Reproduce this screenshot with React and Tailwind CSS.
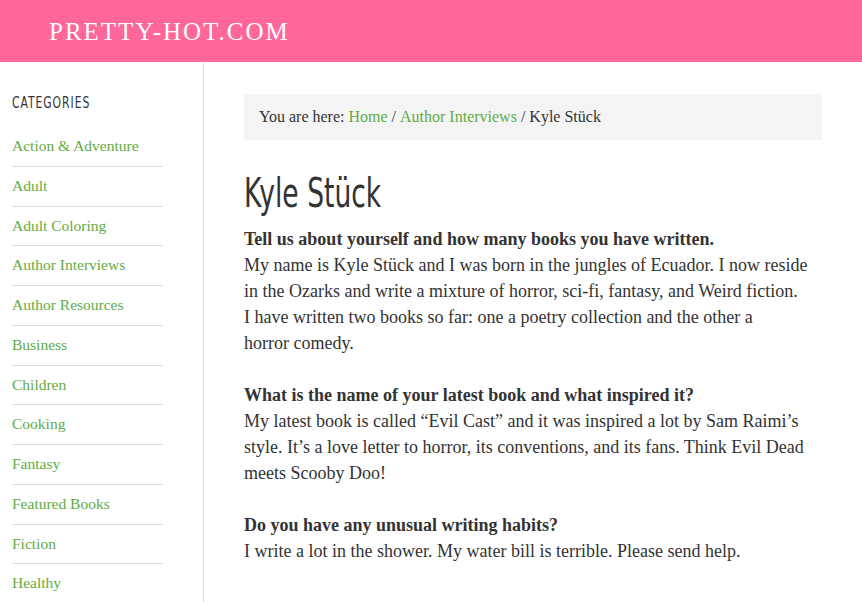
export default function App() {
  const cats = [
    "Action & Adventure",
    "Adult",
    "Adult Coloring",
    "Author Interviews",
    "Author Resources",
    "Business",
    "Children",
    "Cooking",
    "Fantasy",
    "Featured Books",
    "Fiction",
    "Healthy",
  ];
  const serif = { fontFamily: '"Liberation Serif", serif' };
  const cond = { fontFamily: '"DejaVu Sans Condensed", "DejaVu Sans", sans-serif' };
  return (
    <div className="w-[862px] h-[602px] overflow-hidden bg-white text-[#333]" style={serif}>
      <header className="h-[62px] bg-[#ff6699] flex items-center pl-[49px]">
        <div className="text-white text-[25px] tracking-[2px] pt-[1px]">PRETTY-HOT.COM</div>
      </header>
      <div className="flex">
        <aside className="w-[204px] shrink-0 border-r border-[#dddddd] pl-[12px] pt-[32px] h-[540px]">
          <h4 className="text-[15px] tracking-[1.2px] font-medium text-[#333] uppercase leading-[18px] origin-left scale-x-[0.8]" style={cond}>Categories</h4>
          <ul className="w-[151px] mt-[24px]">
            {cats.map((c, i) => (
              <li key={c} className={`text-[15.5px] text-[#62ab45] leading-[19.75px] pb-[10px] ${i === 0 ? "pt-0" : "pt-[9px]"} ${i < cats.length - 1 ? "border-b border-[#dddddd]" : ""}`}>{c}</li>
            ))}
          </ul>
        </aside>
        <main className="w-[578px] ml-[40px] pt-[32px]">
          <div className="bg-[#f4f4f4] h-[46px] flex items-center pl-[15px] text-[16px]">
            You are here:&nbsp;<span className="text-[#62ab45]">Home</span>&nbsp;/&nbsp;<span className="text-[#62ab45]">Author Interviews</span>&nbsp;/ Kyle Stück
          </div>
          <h1 className="mt-[28px] text-[41px] leading-[50px] text-[#333] origin-left scale-x-[0.72] whitespace-nowrap" style={cond}>Kyle Stück</h1>
          <div className="text-[18px] leading-[26px] mt-[8px]">
            <p>
              <b>Tell us about yourself and how many books you have written.</b><br />
              My name is Kyle Stück and I was born in the jungles of Ecuador. I now reside<br />
              in the Ozarks and write a mixture of horror, sci-fi, fantasy, and Weird fiction.<br />
              I have written two books so far: one a poetry collection and the other a<br />
              horror comedy.
            </p>
            <p className="mt-[26px]">
              <b>What is the name of your latest book and what inspired it?</b><br />
              My latest book is called “Evil Cast” and it was inspired a lot by Sam Raimi’s<br />
              style. It’s a love letter to horror, its conventions, and its fans. Think Evil Dead<br />
              meets Scooby Doo!
            </p>
            <p className="mt-[26px]">
              <b>Do you have any unusual writing habits?</b><br />
              I write a lot in the shower. My water bill is terrible. Please send help.
            </p>
          </div>
        </main>
      </div>
    </div>
  );
}
